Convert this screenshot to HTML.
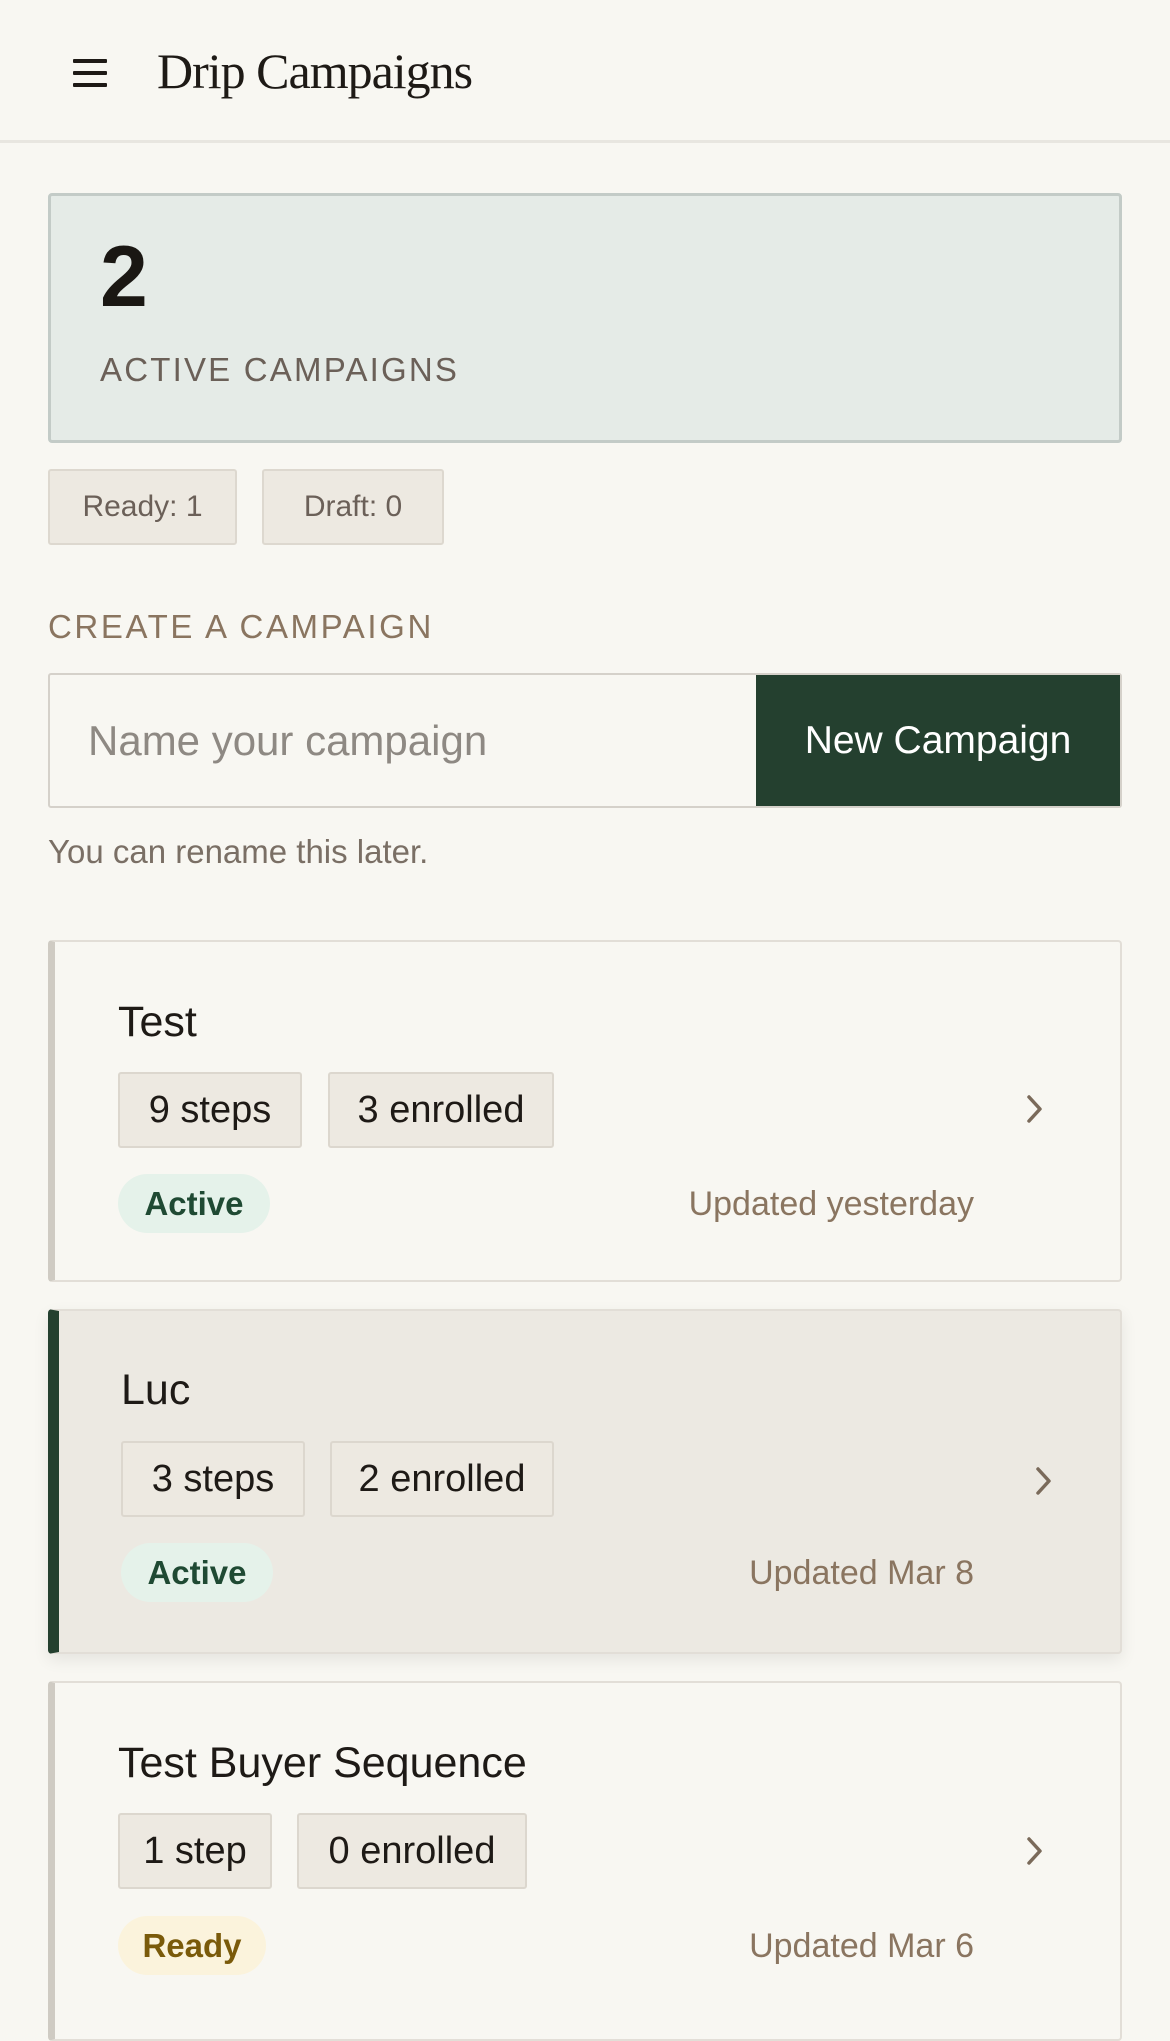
<!DOCTYPE html>
<html><head><meta charset="utf-8"><style>
*{box-sizing:border-box;margin:0;padding:0}
body{width:1170px;height:1992px;overflow:hidden;background:#f8f7f2;font-family:"Liberation Sans",sans-serif;position:relative;color:#1e1a16}
.a{position:absolute}
.hdr{left:0;top:0;width:1170px;height:143px;border-bottom:3px solid #e8e6e0}
.burger{left:73px;top:59px;width:34px}
.burger i{display:block;height:4px;background:#1e1a16;margin-bottom:8px;border-radius:1px}
.title{left:157px;top:42px;font-family:"Liberation Serif",serif;font-size:50px;letter-spacing:-1px;color:#1e1a16}
.stat{left:48px;top:193px;width:1074px;height:250px;background:#e5ebe7;border:3px solid #c3cbc7;border-radius:4px}
.big{left:100px;top:234px;font-size:86px;font-weight:bold;line-height:1;color:#1a1713}
.lbl{left:100px;top:353px;font-size:33px;letter-spacing:2.2px;color:#6b6058;line-height:1}
.chip{background:#ede9e1;border:2px solid #ddd8cf;border-radius:3px;font-size:30px;color:#6b6058;display:flex;align-items:center;justify-content:center}
.sec{left:48px;top:610px;font-size:33px;letter-spacing:2.6px;color:#8a7560;line-height:1}
.inp{left:48px;top:673px;width:1074px;height:135px;border:2px solid #d5d1ca;border-radius:3px;background:#f8f7f2}
.ph{left:88px;top:720px;font-size:42px;color:#8e8983;line-height:1}
.btn{left:756px;top:675px;width:364px;height:131px;background:#24402f;color:#fff;font-size:39px;display:flex;align-items:center;justify-content:center}
.hint{left:48px;top:835px;font-size:33px;color:#7a6f65;line-height:1}
.card{left:48px;width:1074px;border:2px solid #e2ded7;border-left:7px solid #cfcbc3;border-radius:4px;background:#f8f7f2}
.card.sel{background:#ece9e2;border-left:11px solid #24402f;box-shadow:0 6px 16px rgba(0,0,0,.08)}
.ct{font-size:43px;line-height:1;color:#1e1a16}
.pill{background:#ede9e1;border:2px solid #dcd7ce;border-radius:3px;height:76px;font-size:38px;display:flex;align-items:center;justify-content:center;color:#1e1a16}
.badge{border-radius:30px;font-size:33px;font-weight:bold;display:flex;align-items:center;justify-content:center;height:59px}
.act{background:#e5f2ea;color:#1f4a33}
.rdy{background:#fbf3dc;color:#7a5a0a}
.upd{font-size:34px;color:#8a7560;line-height:1;text-align:right;width:500px}
</style></head><body>
<div class="a hdr"></div>
<div class="a burger"><i></i><i></i><i></i></div>
<div class="a title">Drip Campaigns</div>

<div class="a stat"></div>
<div class="a big">2</div>
<div class="a lbl">ACTIVE CAMPAIGNS</div>
<div class="a chip" style="left:48px;top:469px;width:189px;height:76px">Ready: 1</div>
<div class="a chip" style="left:262px;top:469px;width:182px;height:76px">Draft: 0</div>

<div class="a sec">CREATE A CAMPAIGN</div>
<div class="a inp"></div>
<div class="a ph">Name your campaign</div>
<div class="a btn">New Campaign</div>
<div class="a hint">You can rename this later.</div>

<!-- card 1 -->
<div class="a card" style="top:940px;height:342px"></div>
<div class="a ct" style="left:118px;top:1001px">Test</div>
<div class="a pill" style="left:118px;top:1072px;width:184px">9 steps</div>
<div class="a pill" style="left:328px;top:1072px;width:226px">3 enrolled</div>
<div class="a badge act" style="left:118px;top:1174px;width:152px">Active</div>
<div class="a upd" style="left:474px;top:1187px">Updated yesterday</div>
<svg class="a" style="left:1022px;top:1094px" width="26" height="30" viewBox="0 0 26 30"><path d="M7 3 L18 15 L7 27" fill="none" stroke="#7a6a5a" stroke-width="3.5" stroke-linecap="round" stroke-linejoin="round"/></svg>

<!-- card 2 -->
<div class="a card sel" style="top:1309px;height:345px"></div>
<div class="a ct" style="left:121px;top:1369px">Luc</div>
<div class="a pill" style="left:121px;top:1441px;width:184px">3 steps</div>
<div class="a pill" style="left:330px;top:1441px;width:224px">2 enrolled</div>
<div class="a badge act" style="left:121px;top:1543px;width:152px">Active</div>
<div class="a upd" style="left:474px;top:1556px">Updated Mar 8</div>
<svg class="a" style="left:1031px;top:1466px" width="26" height="30" viewBox="0 0 26 30"><path d="M7 3 L18 15 L7 27" fill="none" stroke="#7a6a5a" stroke-width="3.5" stroke-linecap="round" stroke-linejoin="round"/></svg>

<!-- card 3 -->
<div class="a card" style="top:1681px;height:360px"></div>
<div class="a ct" style="left:118px;top:1742px">Test Buyer Sequence</div>
<div class="a pill" style="left:118px;top:1813px;width:154px">1 step</div>
<div class="a pill" style="left:297px;top:1813px;width:230px">0 enrolled</div>
<div class="a badge rdy" style="left:118px;top:1916px;width:148px">Ready</div>
<div class="a upd" style="left:474px;top:1929px">Updated Mar 6</div>
<svg class="a" style="left:1022px;top:1836px" width="26" height="30" viewBox="0 0 26 30"><path d="M7 3 L18 15 L7 27" fill="none" stroke="#7a6a5a" stroke-width="3.5" stroke-linecap="round" stroke-linejoin="round"/></svg>
</body></html>
